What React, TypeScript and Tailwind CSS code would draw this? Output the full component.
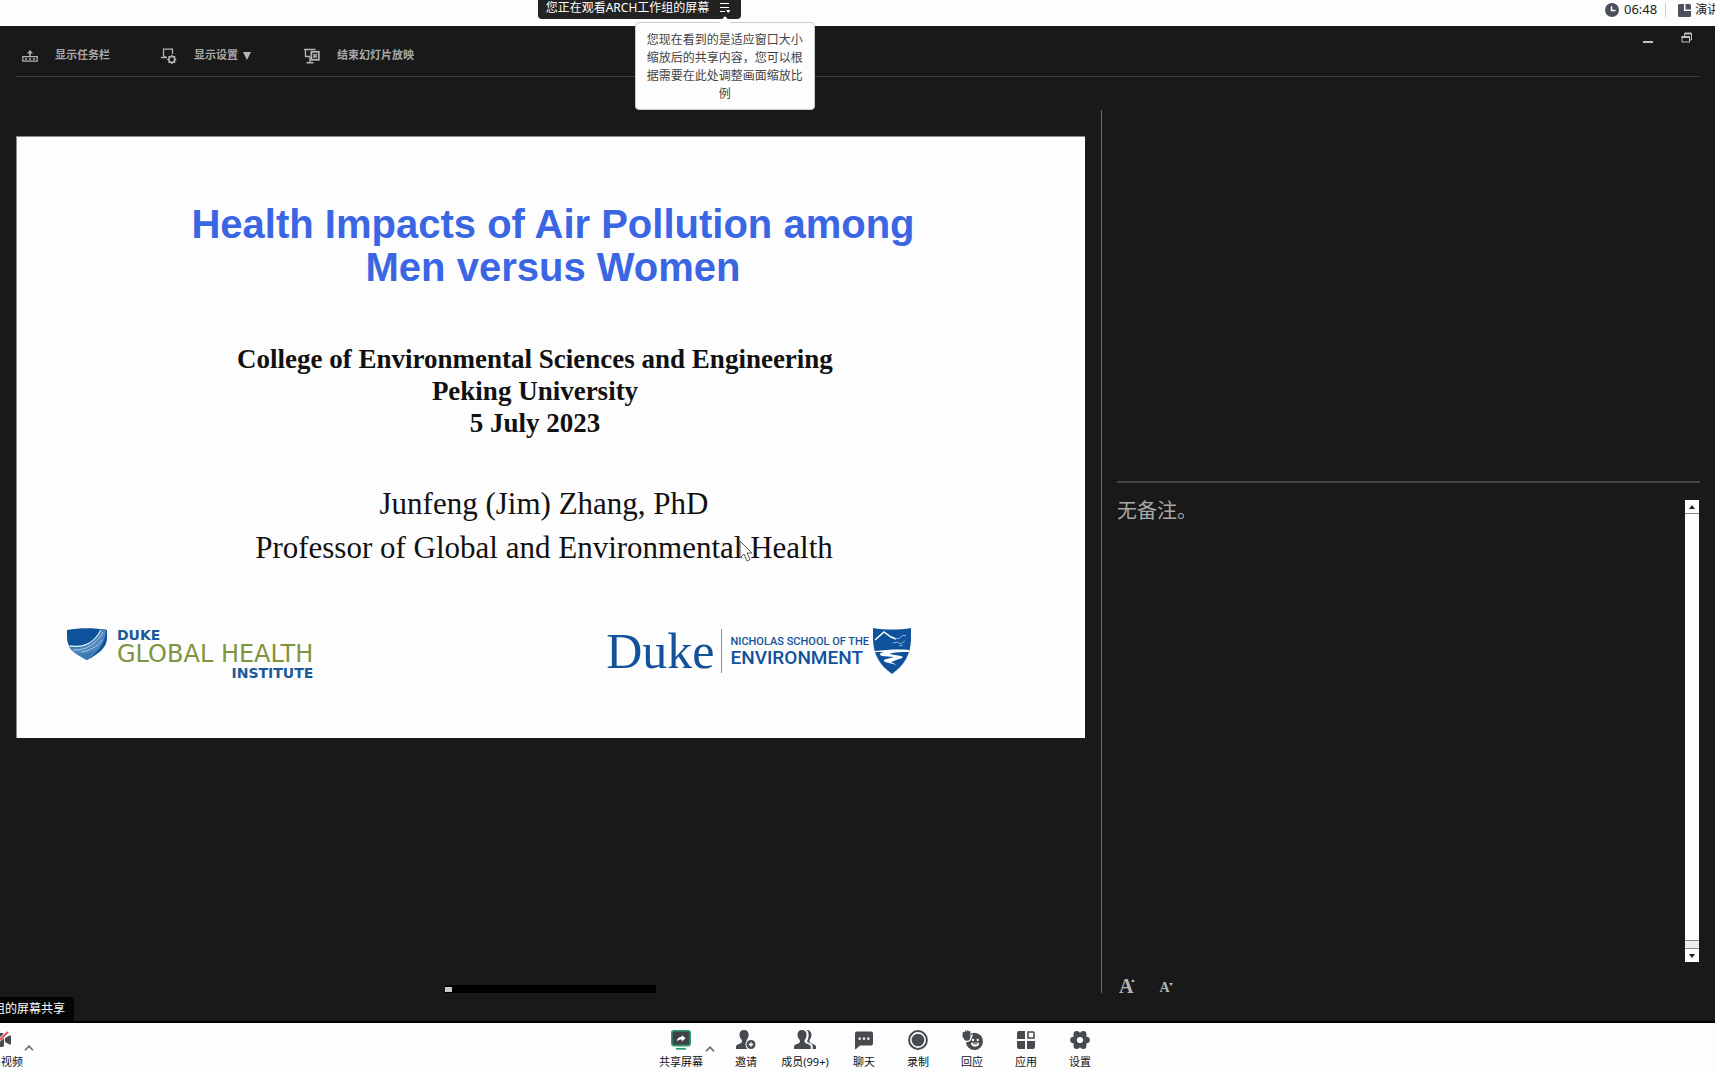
import React from "react";

const textFont = "font-['Noto_Sans','Noto_Sans_CJK_SC',sans-serif]";

const ClockIcon = () => (
  <svg viewBox="0 0 14 14" className="size-[14px]">
    <circle cx="7" cy="7" r="7" fill="#4b505a" />
    <path d="M6.5 3.2v4.3h4" fill="none" stroke="#fff" strokeWidth="1.5" />
  </svg>
);

const LayoutIcon = () => (
  <svg viewBox="0 0 13 13" className="size-[13px]" fill="#4b505a">
    <path d="M1.5 0H6v7h7v4.500a1.500 1.500 0 0 1-1.500 1.500h-10A1.500 1.500 0 0 1 0 11.500v-10A1.500 1.500 0 0 1 1.500 0Z" />
    <path d="M7.500 0h4A1.500 1.500 0 0 1 13 1.500v4H7.500Z" />
  </svg>
);

const ListIcon = () => (
  <svg viewBox="0 0 12 12" className="h-3 w-3" fill="none" stroke="#fff" strokeWidth="1.2">
    <path d="M1 1.500h9M1 5.500h9M1 9.500h5" />
    <path d="M7 8h4.500L9.200 11Z" fill="#fff" stroke="none" />
  </svg>
);

const TaskbarIcon = () => (
  <svg viewBox="0 0 16 16" className="size-4" fill="none" stroke="#b4b4b4" strokeWidth="1.2">
    <path d="M.8 8.600h14.400v4.600H.8Z" />
    <path d="M3 11h2M7 11h2M11 11h2" strokeWidth="1.5" />
    <path d="M8 8.500V4" strokeWidth="1.500" />
    <path d="M5 5.500 8 2l3 3.500Z" fill="#b4b4b4" stroke="none" />
  </svg>
);

const DisplaySettingsIcon = () => (
  <svg viewBox="0 0 16 16" className="size-4" fill="none" stroke="#b4b4b4" strokeWidth="1.3">
    <path d="M2.500 8V1.200h9V6M0 9.500h6M2.500 8l3 1.500" />
    <circle cx="10.800" cy="11.500" r="3" strokeWidth="1.700" />
    <path
      d="M10.800 7v1.500M10.800 14.500V16M6.300 11.500h1.500M13.800 11.500h1.500M7.600 8.300l1.100 1.100M12.900 13.600l1.100 1.100M14 8.300l-1.100 1.100M8.700 13.600l-1.100 1.100"
      strokeWidth="1.600"
    />
  </svg>
);

const EndShowIcon = () => (
  <svg viewBox="0 0 16 16" className="size-4" fill="none" stroke="#b4b4b4" strokeWidth="1.4">
    <path d="M0 1.500h11.500M1.500 1.500v7h4.500M6 9v5M2.500 14.800h7" />
    <rect x="7.300" y="3.800" width="7.500" height="8" strokeWidth="1.800" />
    <path d="m9.300 6 3.500 3.600M12.800 6 9.300 9.600" strokeWidth="1.600" />
  </svg>
);

const RestoreIcon = () => (
  <svg viewBox="0 0 12 12" className="size-3" fill="none" stroke="#c0c0c0">
    <path d="M3.500 4V1.500h7V8H8.500" />
    <path d="M3.500 1.500h7" strokeWidth="2" />
    <rect x="1" y="5" width="7.500" height="5" />
    <path d="M.5 5h8.500" strokeWidth="2" />
  </svg>
);

const CaretUp = () => (
  <svg viewBox="0 0 10 6" className="h-[6px] w-[10px]" fill="none" stroke="#666" strokeWidth="1.6">
    <path d="M1 5.200 5 1.200l4 4" />
  </svg>
);

const CameraOffIcon = () => (
  <svg viewBox="0 0 20 20" className="size-5" fill="#474b4f">
    <rect x="-1" y="3" width="14" height="14" rx="2" />
    <path d="m14 8 4.500-2.500c.8-.3 1.500 0 1.500.8v7.400c0 .8-.7 1.100-1.500.8L14 12Z" />
    <path d="M0 18 17 2" stroke="#fff" strokeWidth="3.400" />
    <path d="M0 18 17 2" stroke="#e04c58" strokeWidth="2" />
  </svg>
);

const ShareScreenIcon = () => (
  <svg viewBox="0 0 20 20" className="size-5">
    <rect x=".8" y=".8" width="18.400" height="14.800" rx="2" fill="#3f4246" stroke="#2f9e6e" strokeWidth="1.600" />
    <path d="M5.800 11.500c.3-3.300 2.200-4.600 5-4.700V5l3.700 3.300-3.700 3.200V9.600c-2.200 0-3.600.5-5 1.900Z" fill="#fff" />
    <path d="M5 18.800h10" stroke="#2f9e6e" strokeWidth="1.800" />
  </svg>
);

const personPath =
  "M8 0c2.900 0 4.600 2 4.600 4.800 0 2.200-.8 4-2 5.200v1.500c0 .9.600 1.300 1.500 1.700l3 1.300c1.200.6 1.700 1.300 1.700 2.500v2H0v-2c0-1.200.6-1.900 1.700-2.500l3-1.300c.8-.4 1.200-.8 1.200-1.700V10C4.400 8.800 3.500 7 3.500 4.800 3.500 2 5.100 0 8 0Z";

const InviteIcon = () => (
  <svg viewBox="0 0 20 20" className="size-5" fill="#474b4f">
    <path d={personPath} />
    <circle cx="15" cy="14.500" r="5.500" fill="#fff" />
    <circle cx="15" cy="14.500" r="4.500" />
    <path d="M15 12.200v4.600M12.700 14.500h4.600" stroke="#fff" strokeWidth="1.400" />
  </svg>
);

const MembersIcon = () => (
  <svg viewBox="0 0 22 20" className="h-5 w-[22px]" fill="#474b4f">
    <path d={personPath} />
    <path d="M12.500 0c2.800 0 5 2 5 4.800 0 2.200-.8 4-2 5.200v1.300c0 .9.500 1.300 1.400 1.700l3.100 1.500c1.300.6 2 1.400 2 2.600V19h-3.300v-2.500c0-1.500-.8-2.400-2-2.900l-3-1.300c-.4-.3-.5-.5-.5-.9v-.7c1-1.500 1.400-3.500 1.400-5.900C14.600 2.700 14 1 12.500 0Z" />
  </svg>
);

const ChatIcon = () => (
  <svg viewBox="0 0 20 20" className="size-5" fill="#474b4f">
    <path d="M3 1.500h14a2 2 0 0 1 2 2v10a2 2 0 0 1-2 2H6L2 19c-.6.400-1 .2-1-.5v-15a2 2 0 0 1 2-2Z" />
    <path d="M4.600 7.500h2.200v2.200H4.600ZM8.900 7.500h2.200v2.200H8.900ZM13.200 7.500h2.200v2.200h-2.200Z" fill="#fff" />
  </svg>
);

const RecordIcon = () => (
  <svg viewBox="0 0 20 20" className="size-5">
    <circle cx="10" cy="10" r="8.900" fill="none" stroke="#474b4f" strokeWidth="2" />
    <circle cx="10" cy="10" r="6.300" fill="#474b4f" />
  </svg>
);

const ReactIcon = () => (
  <svg viewBox="0 0 22 21" className="h-5 w-[21px]" fill="#474b4f">
    <circle cx="13" cy="12" r="9" />
    <path
      d="M1 2.500v5C1 10 2.600 12 5 12s4-1.300 4.300-3.600l1-2.600-2 .8V1"
      fill="#474b4f"
      stroke="#fff"
      strokeWidth="1.500"
    />
    <path d="M1.500 3v4.500M3.700 1.500V7M5.900 1v6M8 2v5" stroke="#474b4f" strokeWidth="1.700" strokeLinecap="round" />
    <circle cx="11.500" cy="10.500" r="1.200" fill="#fff" />
    <circle cx="16.500" cy="10.500" r="1.200" fill="#fff" />
    <path d="M9.500 13.500h8.500a4.200 4 0 0 1-8.500 0Z" fill="#fff" />
    <path d="M11.500 14.500h4.500" stroke="#474b4f" strokeWidth="1" />
  </svg>
);

const AppsIcon = () => (
  <svg viewBox="0 0 20 20" className="size-5" fill="#474b4f">
    <path d="M3 1h6v8H1V3a2 2 0 0 1 2-2ZM1 11h8v8H3a2 2 0 0 1-2-2ZM11 11h8v6a2 2 0 0 1-2 2h-6Z" />
    <path d="M12 2h5.200a.8.800 0 0 1 .8.800V8h-6Z" fill="none" stroke="#474b4f" strokeWidth="1.600" />
  </svg>
);

const SettingsIcon = () => (
  <svg viewBox="0 0 20 20" className="size-5" fill="#474b4f">
    <circle cx="10" cy="10" r="7.500" />
    <circle cx="3.400" cy="10" r="3.200" />
    <circle cx="16.600" cy="10" r="3.200" />
    <circle cx="6.700" cy="4.200" r="3.200" />
    <circle cx="13.300" cy="4.200" r="3.200" />
    <circle cx="6.700" cy="15.800" r="3.200" />
    <circle cx="13.300" cy="15.800" r="3.200" />
    <circle cx="10" cy="10" r="3.100" fill="#fff" />
  </svg>
);

const meetingActions = [
  { label: "邀请", icon: <InviteIcon />, width: "w-[54px]" },
  { label: "成员(99+)", icon: <MembersIcon />, width: "w-16" },
  { label: "聊天", icon: <ChatIcon />, width: "w-[54px]" },
  { label: "录制", icon: <RecordIcon />, width: "w-[54px]" },
  { label: "回应", icon: <ReactIcon />, width: "w-[54px]" },
  { label: "应用", icon: <AppsIcon />, width: "w-[54px]" },
  { label: "设置", icon: <SettingsIcon />, width: "w-[54px]" },
];

function ActionButton({ label, icon, width }: { label: string; icon: React.ReactNode; width: string }) {
  return (
    <button className={`flex shrink-0 flex-col items-center gap-1 ${width}`}>
      {icon}
      <span className="text-[11px] leading-4 whitespace-nowrap">{label}</span>
    </button>
  );
}

function TopBar() {
  return (
    <header className="relative flex h-[26px] items-start justify-center bg-[#fdfdfd]">
      <div className="relative mr-[436px] flex h-[19px] items-center gap-[10px] rounded-b bg-[#222] px-2 pb-[3px] text-xs text-white">
        <span className="whitespace-nowrap">您正在观看ARCH工作组的屏幕</span>
        <button aria-label="缩放选项" className="mr-[2px]">
          <ListIcon />
        </button>
        <div
          role="tooltip"
          className="absolute top-[22px] left-[97px] z-10 w-[180px] rounded border border-[#ccc] bg-[#fdfdfd] pt-2 pr-[11px] pb-[6px] pl-[11px] text-center text-xs leading-[18px] text-[#444]"
        >
          <span className="absolute -top-[5px] left-[85px] size-2 rotate-45 bg-[#fdfdfd]" />
          您现在看到的是适应窗口大小缩放后的共享内容，您可以根据需要在此处调整画面缩放比例
        </div>
      </div>
      <div className="absolute top-0 right-0 flex h-5 w-[110px] items-center overflow-hidden text-[#222]">
        <span className="flex shrink-0 items-center gap-[5px] text-[13px]">
          <ClockIcon />
          06:48
        </span>
        <span className="mr-3 ml-2 h-[14px] w-px shrink-0 bg-[#ccc]" />
        <button className="flex shrink-0 items-center gap-1 text-xs">
          <LayoutIcon />
          演讲者视图
        </button>
      </div>
    </header>
  );
}

function PresenterToolbar() {
  return (
    <div className="mr-[15px] ml-4 flex h-[51px] items-start justify-between border-b border-[#3a3a3a] text-[11px] font-bold text-[#a8a8a8]">
      <div className="flex h-[59px] items-center pl-[6px]">
        <button className="flex w-[139px] items-center gap-[17px]">
          <TaskbarIcon />
          显示任务栏
        </button>
        <button className="flex w-[143px] items-center gap-[17px]">
          <DisplaySettingsIcon />
          <span className="flex items-center gap-[5px]">
            显示设置
            <svg viewBox="0 0 8 8" className="size-2" fill="#b4b4b4">
              <path d="M0 0h8L4 8Z" />
            </svg>
          </span>
        </button>
        <button className="flex items-center gap-[17px]">
          <EndShowIcon />
          结束幻灯片放映
        </button>
      </div>
      <div className="flex items-center gap-7 pt-[6px] pr-[7px]">
        <button aria-label="最小化" className="flex h-[10px] w-[10px] items-end">
          <span className="h-[2px] w-full bg-[#c0c0c0]" />
        </button>
        <button aria-label="还原">
          <RestoreIcon />
        </button>
      </div>
    </div>
  );
}

function GlobalHealthLogo() {
  return (
    <div className="flex items-start gap-[10px] font-['DejaVu_Sans',sans-serif] text-[#1b5a9a]">
      <svg viewBox="0 0 40 32" className="h-8 w-10">
        <path d="M0 2C13-.5 27-.5 40 2v8c0 9-8 16-20 22C8 26 0 19 0 10Z" fill="#0d529b" />
        <path d="M2 19c14 3 28-5 34-18l3 .5c0 11-6 21-19 30.500C10 27 4 23 2 19Z" fill="#4d86bd" />
        <path d="M3 18c14 2 25-4 31-16" fill="none" stroke="#dbe8f5" strokeWidth="1.500" />
        <path d="M6 22c12 1 24-6 30-18M14 24c8-1 16-5 21-12" fill="none" stroke="#a9c6e2" />
        <path d="M10 25c8 2 14 0 20-4l-10 11Z" fill="#3b77b4" />
      </svg>
      <div className="flex flex-col">
        <span className="text-sm leading-[14px] font-bold">DUKE</span>
        <span className="text-2xl leading-6 whitespace-nowrap text-[#7d9440]">GLOBAL HEALTH</span>
        <span className="text-right text-sm leading-[14px] font-bold">INSTITUTE</span>
      </div>
    </div>
  );
}

function NicholasSchoolLogo() {
  return (
    <div className="flex items-center text-[#12529b]">
      <span className="pr-[7px] font-['Liberation_Serif',serif] text-[50px] leading-[46px]">Duke</span>
      <span className="h-11 w-px bg-[#6c94c0]" />
      <div className="flex flex-col pr-1 pl-2 font-['Roboto',sans-serif] font-medium whitespace-nowrap">
        <span className="text-[11px] leading-[14px]">NICHOLAS SCHOOL OF THE</span>
        <span className="text-[19px] leading-[18px]">ENVIRONMENT</span>
      </div>
      <svg viewBox="0 0 38 46" className="h-[46px] w-[38px]">
        <path d="M0 0c12 2 26 2 38 0 1 21-2 34-19 46C2 34-1 21 0 0Z" fill="#0d529b" />
        <path d="m2 12 9-8 7 5 5 2" fill="none" stroke="#fff" strokeWidth="1.500" />
        <path d="M2 23c10-1 23-2 34-1v2c-8 0-14 0-20 2l12 2c3 1 2 2-2 3l-8 3 6 3-12-3c-2-1-1-3 2-3l7-2-12-1c-3-1-3-3 2-4H2Z" fill="#fff" />
        <path d="m22 11 5-1 3-3 3 1M20 15l5-1 2 2 5-3M26 18l4-1" fill="none" stroke="#8db1d8" />
      </svg>
    </div>
  );
}

function Slide() {
  return (
    <article className="relative aspect-[1069/602] w-full border-t border-l border-[#8a8a8a] bg-[#fdfdfd] pt-[66px] text-center text-[#111]">
      <h1 className="pl-1 font-['Liberation_Sans',sans-serif] text-[40px] leading-[43px] font-bold text-[#3a66e4]">
        Health Impacts of Air Pollution among
        <br />
        Men versus Women
      </h1>
      <p className="mt-[54px] pr-8 font-['Liberation_Serif',serif] text-[27px] leading-8 font-bold">
        College of Environmental Sciences and Engineering
        <br />
        Peking University
        <br />5 July 2023
      </p>
      <p className="mt-[43px] pr-[14px] font-['Liberation_Serif',serif] text-[31px] leading-[44px]">
        Junfeng (Jim) Zhang, PhD
        <br />
        Professor of Global and Environmental Health
      </p>
      <div className="mt-[58px] flex items-start justify-between pr-[174px] pl-[50px] text-left">
        <GlobalHealthLogo />
        <NicholasSchoolLogo />
      </div>
      {/* presenter's mouse pointer */}
      <svg viewBox="0 0 14 22" className="absolute top-[67%] left-[67%] ml-[6px] h-[22px] w-[14px]">
        <path d="M1 1v17l4-4 3 7 3-1.500-3-6.500h5Z" fill="#fff" stroke="#555" />
      </svg>
    </article>
  );
}

function NotesPanel() {
  return (
    <section className="flex flex-col border-l border-[#6a6a6a] pl-[15px]">
      <div className="flex-[371]" />
      <div className="flex flex-[493] flex-col border-t-2 border-[#444] pt-[17px]">
        <div className="flex flex-1 justify-between">
          <p className="text-xl leading-[22px] text-[#a8a8a8]">无备注。</p>
          <div className="mr-[1px] flex w-[14px] flex-col bg-[#fdfdfd]">
            <button aria-label="向上滚动" className="flex h-[14px] items-center justify-center border-b border-[#888]">
              <svg viewBox="0 0 6 4" className="h-1 w-[6px]">
                <path d="M3 0l3 4H0Z" fill="#222" />
              </svg>
            </button>
            <div className="flex-1" />
            <div className="h-2 border-t border-[#888] bg-[#eee]" />
            <button aria-label="向下滚动" className="flex h-[14px] items-center justify-center border-t border-[#888]">
              <svg viewBox="0 0 6 4" className="h-1 w-[6px]">
                <path d="M0 0h6L3 4Z" fill="#222" />
              </svg>
            </button>
          </div>
        </div>
        <div className="flex h-[31px] items-end gap-6 pl-[2px] font-['Liberation_Serif',serif] font-bold text-[#b4b4b4]">
          <button aria-label="放大文本" className="flex items-start text-xl leading-[14px]">
            A
            <svg viewBox="0 0 4 3" className="-ml-[2px] h-[3px] w-1">
              <path d="M2 0l2 3H0Z" fill="#b4b4b4" />
            </svg>
          </button>
          <button aria-label="缩小文本" className="flex items-start text-sm leading-[10px]">
            A
            <svg viewBox="0 0 4 3" className="-ml-px h-[3px] w-1">
              <path d="M0 0h4L2 3Z" fill="#b4b4b4" />
            </svg>
          </button>
        </div>
      </div>
    </section>
  );
}

function MeetingToolbar() {
  return (
    <footer className="flex h-[49px] items-start overflow-hidden bg-[#fdfdfd] pt-[7px] text-[#111]">
      <div className="-ml-[21px] flex items-start">
        <ActionButton label="开启视频" icon={<CameraOffIcon />} width="w-11" />
        <button aria-label="视频选项" className="mt-[15px] w-3 pl-px">
          <CaretUp />
        </button>
      </div>
      <nav className="flex flex-1 justify-center pl-[14px]">
        <ActionButton label="共享屏幕" icon={<ShareScreenIcon />} width="w-12" />
        <button aria-label="共享选项" className="mt-[15px] mr-1 h-2 w-[10px]">
          <CaretUp />
        </button>
        {meetingActions.map(action => (
          <ActionButton key={action.label} {...action} />
        ))}
      </nav>
    </footer>
  );
}

export default function App() {
  return (
    <div lang="zh-CN" className={`flex min-h-screen flex-col overflow-hidden bg-[#191919] ${textFont}`}>
      <TopBar />
      <main className="relative flex flex-1 flex-col border-b-2 border-black">
        <PresenterToolbar />
        <div className="grid flex-1 grid-cols-[1085fr_599fr] pt-[33px] pr-[15px] pb-7 pl-4">
          <div className="flex flex-col items-center justify-between pt-[26px] pr-4">
            <Slide />
            <div className="flex h-2 w-[211px] items-center bg-black">
              <span className="h-[5px] w-[7px] bg-[#c8c8c8]" />
            </div>
          </div>
          <NotesPanel />
        </div>
        <div className="absolute bottom-0 left-0 flex h-6 w-[74px] items-center justify-end overflow-hidden rounded-tr bg-[#050505] pr-[9px] text-xs whitespace-nowrap text-white">
          组的屏幕共享
        </div>
      </main>
      <MeetingToolbar />
    </div>
  );
}
